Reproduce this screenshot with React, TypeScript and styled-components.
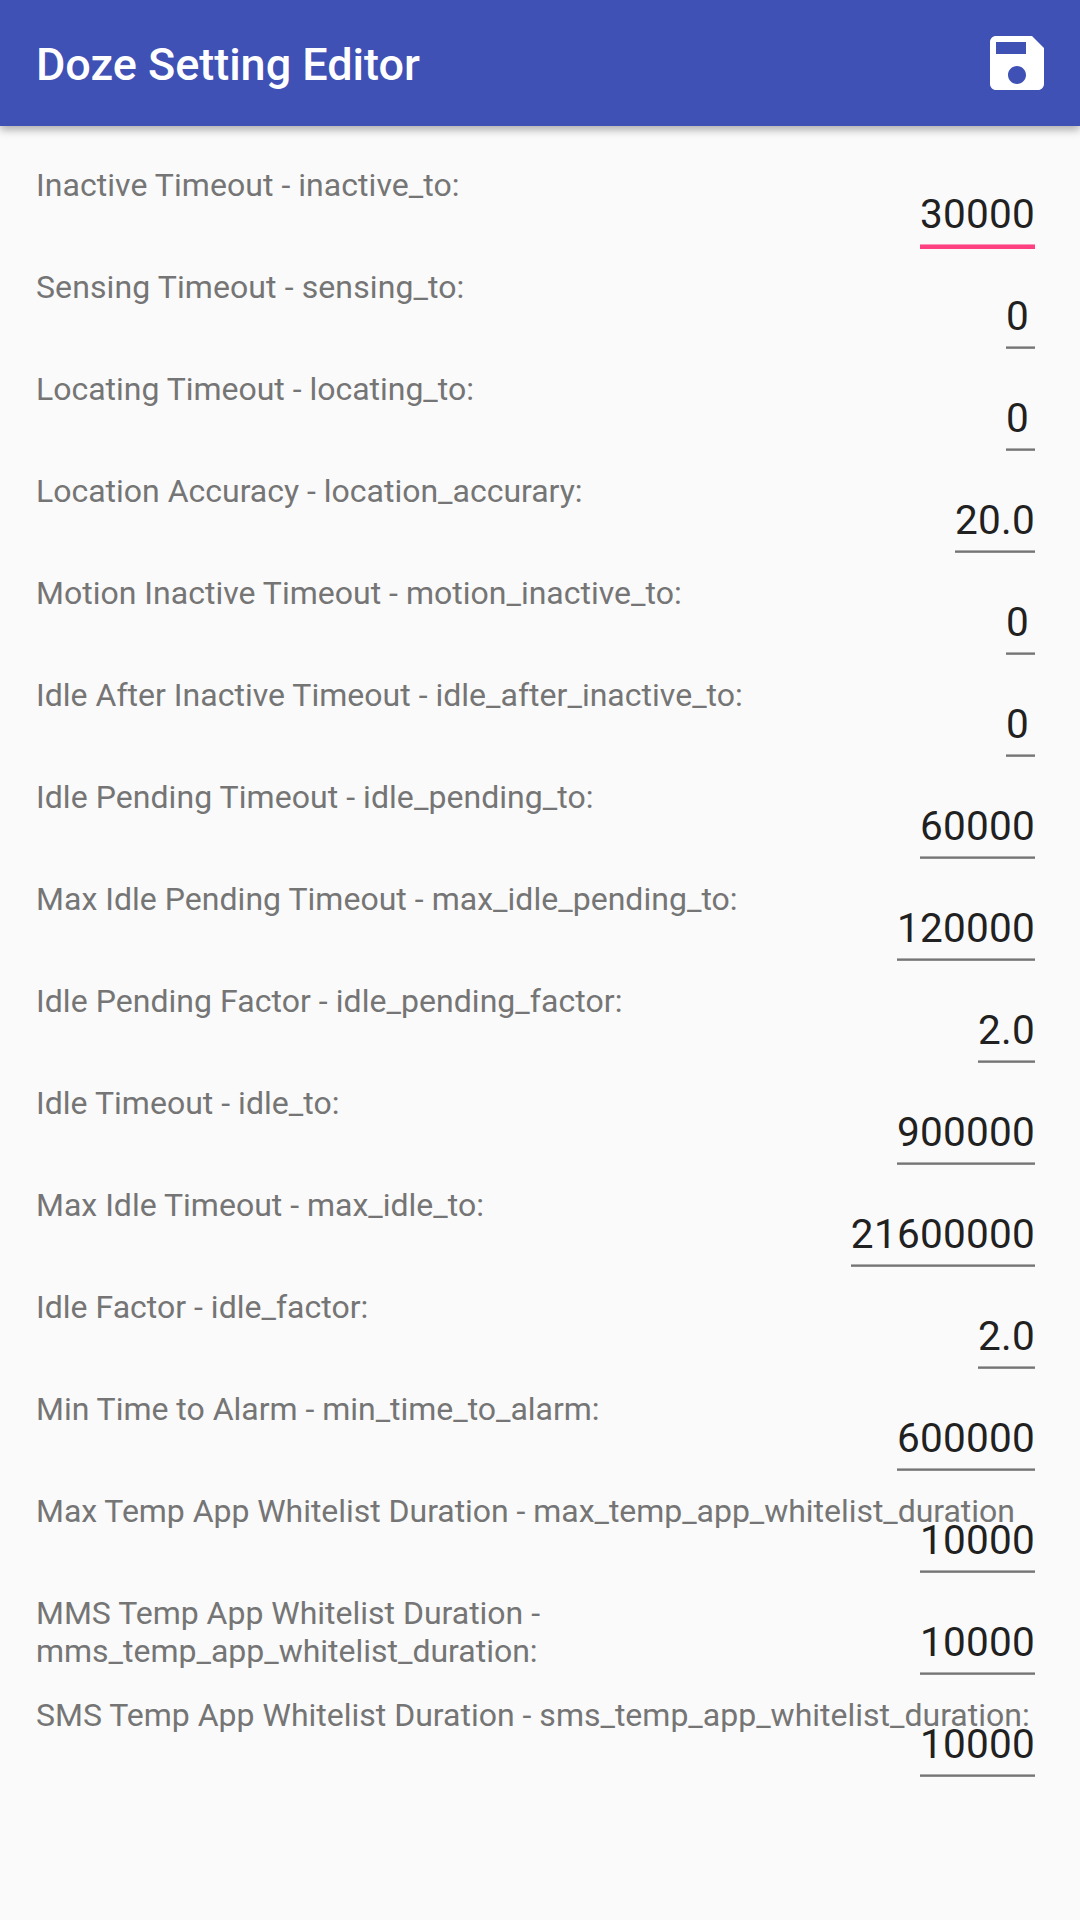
import React from 'react';
import styled, { createGlobalStyle } from 'styled-components';

const Global = createGlobalStyle`
  body { margin: 0; background: #fafafa; font-family: Roboto, sans-serif; }
  * { box-sizing: border-box; }
`;
const Page = styled.div`
  width: 1080px; height: 1920px; display: flex; flex-direction: column; background: #fafafa; overflow: hidden;
`;
const Toolbar = styled.header`
  height: 126px; flex: none; display: flex; align-items: center; justify-content: space-between;
  padding: 0 27px 0 36px; background: #3f51b5; color: #fff;
  box-shadow: 0 4px 8px rgba(0, 0, 0, .3);
`;
const Title = styled.h1`
  margin: 0; font-size: 45px; line-height: 60px; font-weight: 500; padding-top: 4px; letter-spacing: -0.03px;
`;
const SaveButton = styled.button`
  display: flex; padding: 0; border: 0; background: none; color: inherit;
`;
const List = styled.main`
  display: flex; flex-direction: column; padding: 36px 36px 0;
`;
const Row = styled.div`
  display: grid; grid-template-columns: 1fr; height: 102px;
`;
const Label = styled.label<{ $tracking: number }>`
  grid-area: 1 / 1; padding-top: 4px; font-size: 32px; line-height: 38px; color: #757575;
  white-space: pre; letter-spacing: ${p => p.$tracking}px;
`;
const Field = styled.div<{ $active?: boolean }>`
  grid-area: 1 / 1; justify-self: end; align-self: start; margin: 28px 9px 0 0; min-width: 29px;
  height: ${p => (p.$active ? 59 : 57)}px;
  background: ${p =>
    p.$active
      ? 'linear-gradient(#fd95b6 1px, #ff4081 1px) bottom / 100% 5px no-repeat'
      : 'linear-gradient(#adadad 1px, #757575 1px, #757575 2px, #8c8c8c 2px) bottom / 100% 3px no-repeat'};
  font-size: 40.5px; line-height: 48px; color: #212121; letter-spacing: .255px;
`;

const settings: [string, string, number][] = [
  ['Inactive Timeout - inactive_to:', '30000', 0.05],
  ['Sensing Timeout - sensing_to:', '0', 0.1],
  ['Locating Timeout - locating_to:', '0', -0.02],
  ['Location Accuracy - location_accurary:', '20.0', -0.01],
  ['Motion Inactive Timeout - motion_inactive_to:', '0', 0.01],
  ['Idle After Inactive Timeout - idle_after_inactive_to:', '0', 0.015],
  ['Idle Pending Timeout - idle_pending_to:', '60000', 0.055],
  ['Max Idle Pending Timeout - max_idle_pending_to:', '120000', 0.025],
  ['Idle Pending Factor - idle_pending_factor:', '2.0', 0.045],
  ['Idle Timeout - idle_to:', '900000', 0.02],
  ['Max Idle Timeout - max_idle_to:', '21600000', 0],
  ['Idle Factor - idle_factor:', '2.0', 0.01],
  ['Min Time to Alarm - min_time_to_alarm:', '600000', -0.02],
  ['Max Temp App Whitelist Duration - max_temp_app_whitelist_duration', '10000', -0.04],
  ['MMS Temp App Whitelist Duration -\nmms_temp_app_whitelist_duration:', '10000', -0.01],
  ['SMS Temp App Whitelist Duration - sms_temp_app_whitelist_duration:', '10000', 0],
];

export default function App() {
  return (
    <Page>
      <Global />
      <Toolbar>
        <Title>Doze Setting Editor</Title>
        <SaveButton aria-label="Save">
          <svg width="72" height="72" viewBox="0 0 24 24" fill="currentColor">
            <path d="M17 3H5c-1.11 0-2 .9-2 2v14c0 1.1.89 2 2 2h14c1.1 0 2-.9 2-2V7l-4-4zm-5 16c-1.66 0-3-1.34-3-3s1.34-3 3-3 3 1.34 3 3-1.34 3-3 3zm3-10H5V5h10v4z" />
          </svg>
        </SaveButton>
      </Toolbar>
      <List>
        {settings.map(([label, value, tracking], i) => (
          <Row key={label}>
            <Label $tracking={tracking}>{label}</Label>
            <Field $active={i === 0}>{value}</Field>
          </Row>
        ))}
      </List>
    </Page>
  );
}
